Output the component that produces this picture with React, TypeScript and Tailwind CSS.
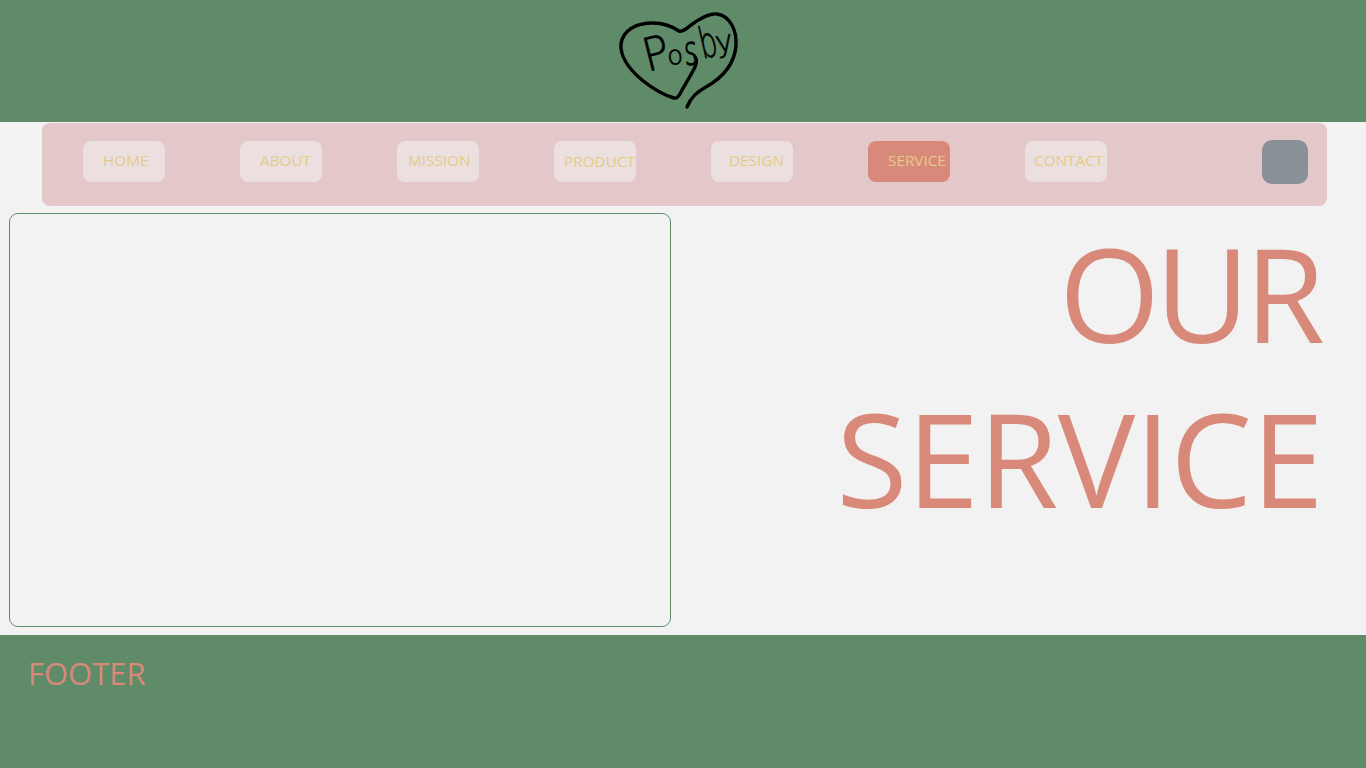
const navItems = [
  { label: "HOME", cls: "pl-[20px] pb-[2px] bg-[#ebdfe0]" },
  { label: "ABOUT", cls: "pl-[20px] pb-[2px] bg-[#ebdfe0]" },
  { label: "MISSION", cls: "pl-[11px] pb-[2px] bg-[#ebdfe0]" },
  { label: "PRODUCT", cls: "pl-[10px] bg-[#ebdfe0]" },
  { label: "DESIGN", cls: "pl-[18px] pb-[2px] bg-[#ebdfe0]" },
  { label: "SERVICE", cls: "pl-[20px] pb-[2px] bg-[#d98979]" },
  { label: "CONTACT", cls: "pl-[9px] pb-[2px] bg-[#ebdfe0]" },
];

function Logo() {
  return (
    <svg viewBox="0 0 160 120" className="w-[160px] h-[120px]" fill="none" stroke="#000" strokeLinecap="round" strokeLinejoin="round">
      {/* heart outline, tail runs off bottom right */}
      <path
        strokeWidth="3.4"
        d="M84 107C88 97 94 92 103 87C119 78 131 66 133 46C134 30 127 16 114 14C105 13 95 20 88 25C83 29 80 32 76 31C70 27 61 23 50 23C33 23 20 30 18 44C17 57 26 69 39 80C50 89 61 95 71 98C74 99 76 96 78 92C83 83 88 75 92 67C94 63 94 60 92 57"
      />
      <g fill="#000" stroke="#000" strokeWidth="0.7" fontFamily="'DejaVu Sans', sans-serif" fontWeight="200">
        <text transform="translate(44 72) rotate(-14) scale(.95 1)" fontSize="46">P</text>
        <text transform="translate(65 65) rotate(-6)" fontSize="26">o</text>
        <text transform="translate(82 65) rotate(-4) scale(.95 1.5)" fontSize="27">s</text>
        <text transform="translate(99.5 59) rotate(-13) scale(.65 1)" fontSize="43">b</text>
        <text transform="translate(114 53) rotate(-10)" fontSize="30">y</text>
      </g>
    </svg>
  );
}

export default function App() {
  return (
    <div className="min-h-screen bg-[#f2f2f2] font-['Open_Sans',sans-serif] overflow-hidden">
      {/* Header */}
      <header className="h-[122px] bg-[#5f8b69] flex justify-center items-start">
        <Logo />
      </header>

      {/* Nav */}
      <nav className="mt-[1px] ml-[42px] w-[1285px] h-[83px] rounded-[8px] bg-[#e4c7c9] flex items-start pl-[41px] pr-[19px] pt-[18px]">
        <div className="flex gap-[75px]">
          {navItems.map((item) => (
            <div key={item.label} className={`w-[82px] h-[41px] rounded-[8px] flex items-center whitespace-nowrap text-[15.3px] text-[#e3cc86] ${item.cls}`}>
              {item.label}
            </div>
          ))}
        </div>
        <div className="ml-auto -mt-[1px] w-[46px] h-[44px] rounded-[10px] bg-[#899097]" />
      </nav>

      {/* Content */}
      <main className="h-[429px] pt-[7px] pl-[9px] pr-[40px] flex">
        <div className="w-[662px] h-[414px] rounded-[9px] border border-[#5f8b69]" />
        <h1 className="flex-1 -mt-[3px] text-right text-[#d98979] text-[130px] leading-[165px] font-normal">
          <div className="tracking-[-5px] mr-[6px]">OUR</div>
          <div className="tracking-[-0.7px] mr-[3px]">SERVICE</div>
        </h1>
      </main>

      {/* Footer */}
      <footer className="h-[133px] bg-[#5f8b69] pl-[28px] pt-[16px]">
        <p className="text-[#d98979] text-[31px] leading-[44px]">FOOTER</p>
      </footer>
    </div>
  );
}
